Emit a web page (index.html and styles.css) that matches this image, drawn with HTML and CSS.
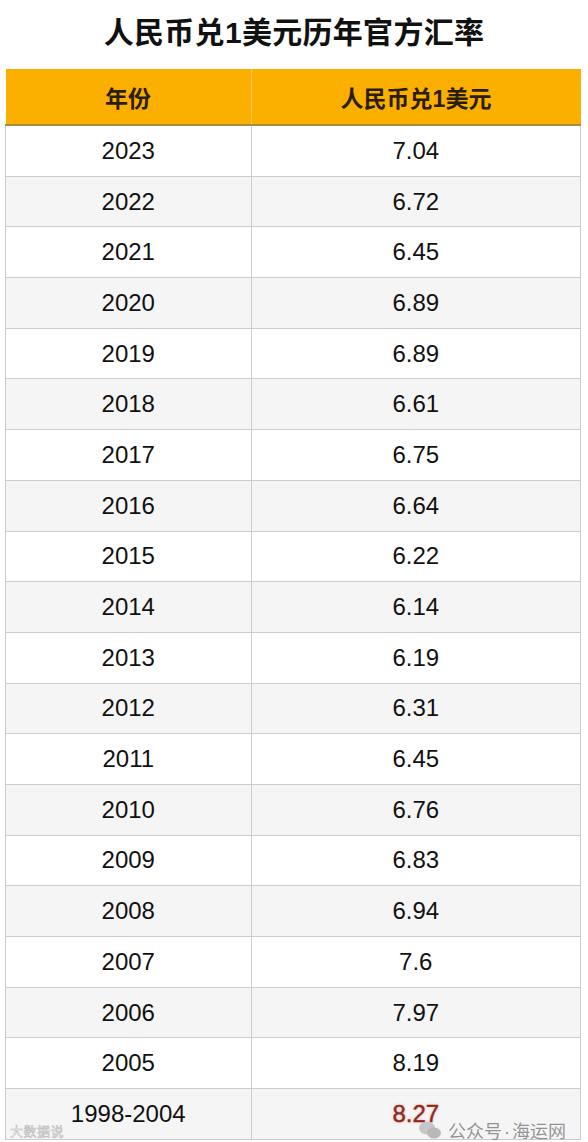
FILE: index.html
```html
<!DOCTYPE html>
<html lang="zh">
<head>
<meta charset="utf-8">
<link rel="stylesheet" href="styles.css">
</head>
<body>
<div class="page">
  <h1 class="title">人民币兑1美元历年官方汇率</h1>
  <table class="rates">
    <thead>
      <tr><th class="c-year">年份</th><th class="c-rate">人民币兑1美元</th></tr>
    </thead>
    <tbody>
      <tr><td>2023</td><td>7.04</td></tr>
      <tr><td>2022</td><td>6.72</td></tr>
      <tr><td>2021</td><td>6.45</td></tr>
      <tr><td>2020</td><td>6.89</td></tr>
      <tr><td>2019</td><td>6.89</td></tr>
      <tr><td>2018</td><td>6.61</td></tr>
      <tr><td>2017</td><td>6.75</td></tr>
      <tr><td>2016</td><td>6.64</td></tr>
      <tr><td>2015</td><td>6.22</td></tr>
      <tr><td>2014</td><td>6.14</td></tr>
      <tr><td>2013</td><td>6.19</td></tr>
      <tr><td>2012</td><td>6.31</td></tr>
      <tr><td>2011</td><td>6.45</td></tr>
      <tr><td>2010</td><td>6.76</td></tr>
      <tr><td>2009</td><td>6.83</td></tr>
      <tr><td>2008</td><td>6.94</td></tr>
      <tr><td>2007</td><td>7.6</td></tr>
      <tr><td>2006</td><td>7.97</td></tr>
      <tr><td>2005</td><td>8.19</td></tr>
      <tr><td>1998-2004</td><td class="hl">8.27</td></tr>
    </tbody>
  </table>
  <div class="wm-left">大数据说</div>
  <div class="wm-right">
    <svg class="wx" width="24" height="20" viewBox="0 0 24 20"><ellipse cx="9" cy="8" rx="8" ry="6.5" fill="#bbb"/><ellipse cx="16" cy="13" rx="7" ry="5.5" fill="#aaa"/></svg>
    <span>公众号<span class="dot">·</span>海运网</span>
  </div>
</div>
</body>
</html>
```
FILE: styles.css
```css
html, body { margin: 0; padding: 0; background: #fff; }
.page {
  position: relative;
  width: 588px;
  height: 1142px;
  overflow: hidden;
  font-family: "Liberation Sans", "Noto Sans CJK SC", sans-serif;
}
.title {
  margin: 0;
  height: 69px;
  line-height: 66px;
  text-align: center;
  font-size: 30px;
  font-weight: bold;
  color: #111;
  letter-spacing: 0.3px;
}
.rates {
  margin-left: 5px;
  width: 576px;
  border-collapse: collapse;
  table-layout: fixed;
}
.rates th {
  background: #fbb000;
  color: #2b1c05;
  font-size: 23px;
  font-weight: bold;
  height: 55px;
  padding: 0;
  border-bottom: 2px solid #a98a45;
  border-left: 1px solid #f7c862;
}
.rates th:first-child { border-left: none; }
.c-year { width: 245px; }
.rates td {
  height: 49.7px;
  padding: 0;
  text-align: center;
  font-size: 24px;
  color: #111;
  border: 1px solid #cccccc;
}
.rates tbody tr:nth-child(even) td { background: #f5f5f5; }
.rates td.hl {
  color: #8e2a20;
  -webkit-text-stroke: 0.4px #8e2a20;
  text-shadow: 0 0 3px rgba(230, 120, 100, 0.5);
}
.wm-left {
  position: absolute;
  left: 10px;
  bottom: 2px;
  font-size: 13px;
  color: rgba(255,255,255,0.6);
  -webkit-text-stroke: 0.6px #bbb;
  letter-spacing: 0.5px;
}
.wm-right {
  position: absolute;
  right: 22px;
  top: 1117px;
  display: flex;
  align-items: center;
  gap: 6px;
  color: rgba(130,130,130,0.85);
  font-size: 18px;
  font-family: "Noto Sans CJK SC", sans-serif;
}
.dot { margin: 0 2px; font-family: "Liberation Sans", sans-serif; }
.wx { opacity: 0.8; }
```
